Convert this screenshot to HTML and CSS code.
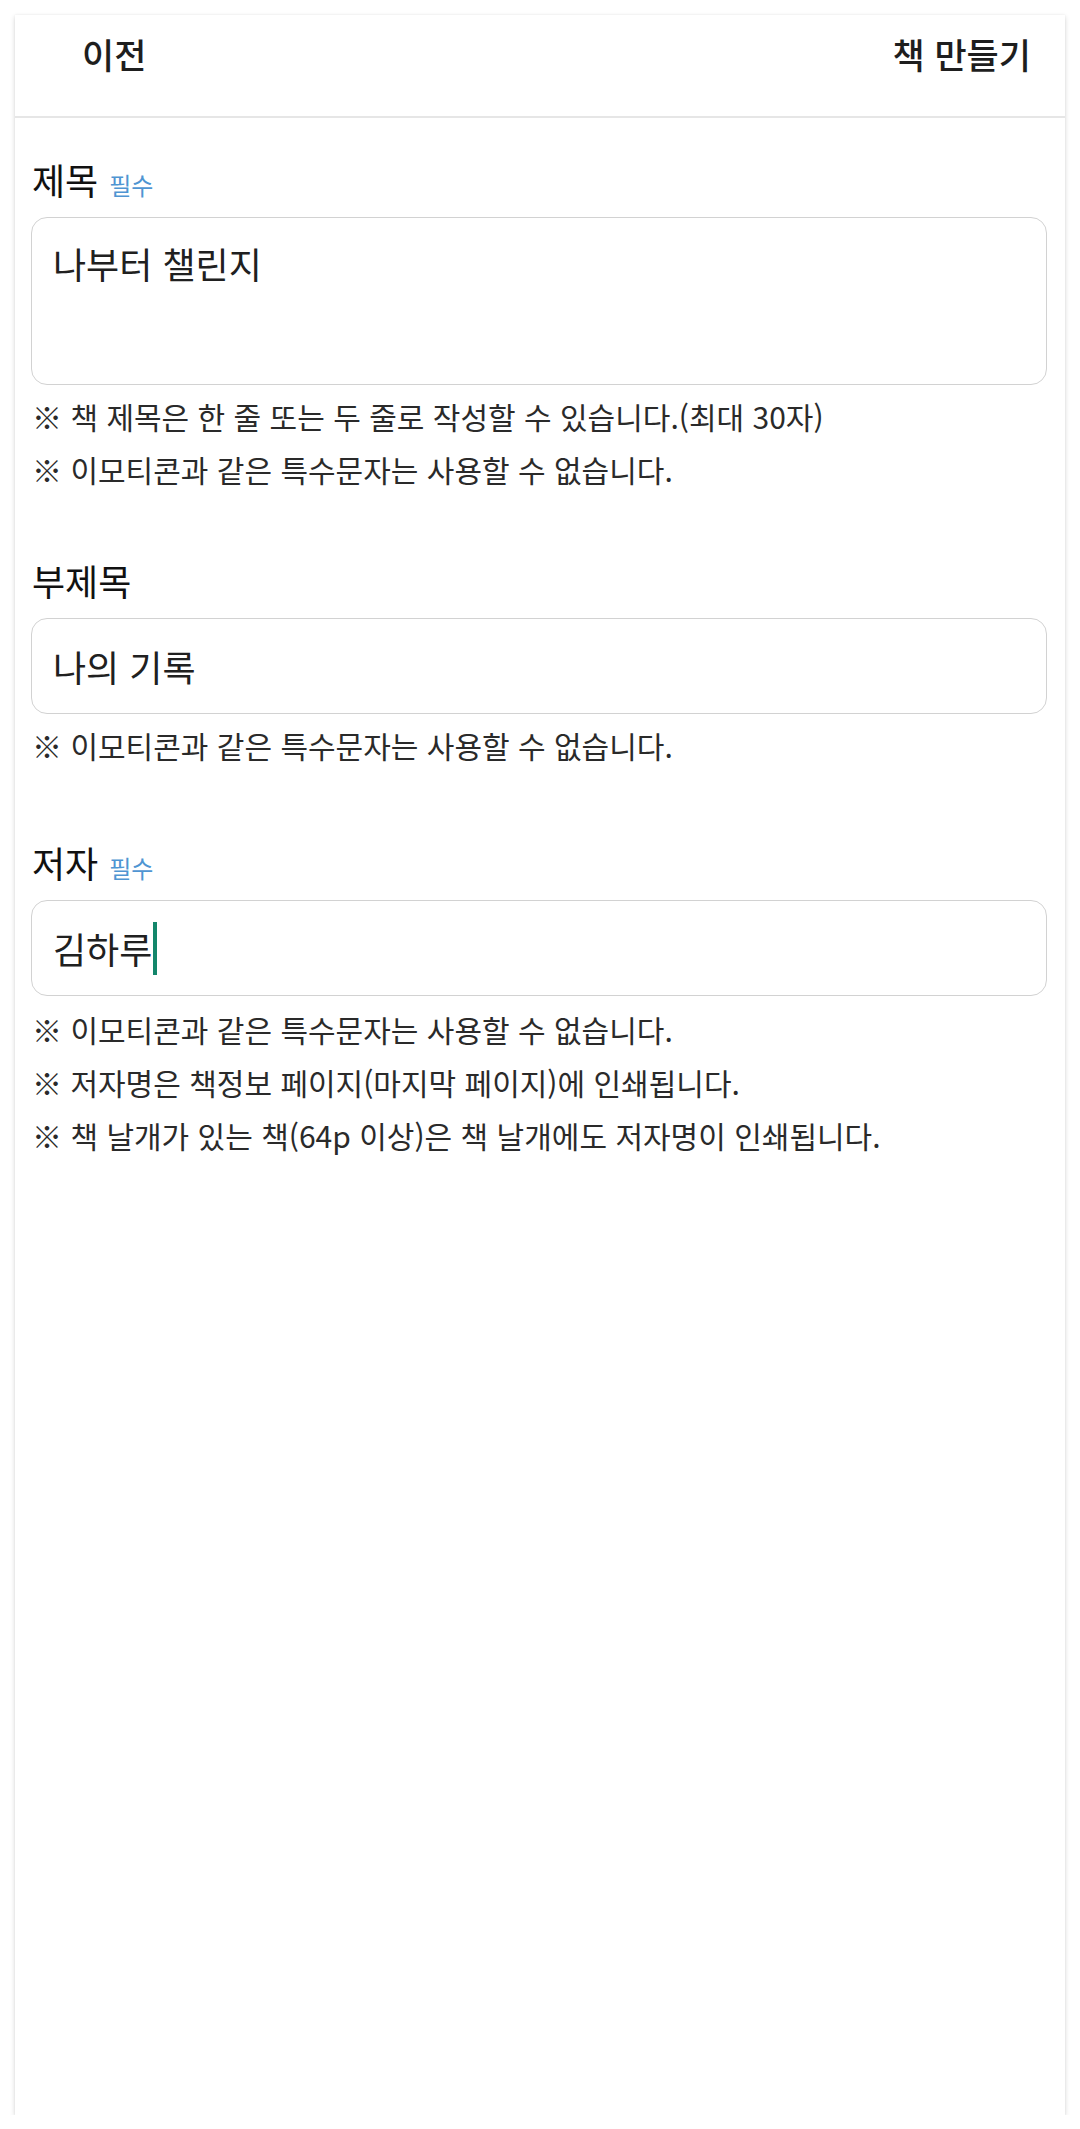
FILE: index.html
```html
<!DOCTYPE html>
<html lang="ko">
<head>
<meta charset="utf-8">
<title>책 만들기</title>
<link rel="stylesheet" href="styles.css">
</head>
<body>
<div class="card">
  <header class="topbar">
    <span class="nav-btn">이전</span>
    <span class="nav-btn nav-right">책 만들기</span>
  </header>
  <main class="form">
    <section class="group">
      <div class="label">제목<span class="req">필수</span></div>
      <div class="field field-area">나부터 챌린지</div>
      <p class="hint">※ 책 제목은 한 줄 또는 두 줄로 작성할 수 있습니다.(최대 30자)</p>
      <p class="hint">※ 이모티콘과 같은 특수문자는 사용할 수 없습니다.</p>
    </section>
    <section class="group">
      <div class="label">부제목</div>
      <div class="field field-line">나의 기록</div>
      <p class="hint">※ 이모티콘과 같은 특수문자는 사용할 수 없습니다.</p>
    </section>
    <section class="group">
      <div class="label">저자<span class="req">필수</span></div>
      <div class="field field-line">김하루<span class="caret"></span></div>
      <p class="hint">※ 이모티콘과 같은 특수문자는 사용할 수 없습니다.</p>
      <p class="hint">※ 저자명은 책정보 페이지(마지막 페이지)에 인쇄됩니다.</p>
      <p class="hint">※ 책 날개가 있는 책(64p 이상)은 책 날개에도 저자명이 인쇄됩니다.</p>
    </section>
  </main>
</div>
</body>
</html>
```

FILE: styles.css
```css
html, body {
  margin: 0;
  padding: 0;
  background: #ffffff;
}

body {
  font-family: "Noto Sans CJK KR", "Noto Sans", sans-serif;
  color: #222222;
}

.card {
  margin: 15px 15px 0 15px;
  width: 1050px;
  height: 2100px;
  background: #ffffff;
  box-shadow: 0 2px 5px rgba(0, 0, 0, 0.16), 0 0 2px rgba(0, 0, 0, 0.06);
  box-sizing: border-box;
}

.topbar {
  height: 103px;
  box-sizing: border-box;
  border-bottom: 2px solid #e6e6e6;
  display: flex;
  justify-content: space-between;
  align-items: flex-start;
  padding: 16px 34px 0 67px;
}

.nav-btn {
  font-size: 35px;
  line-height: 45px;
  font-weight: 500;
  color: #1e1e1e;
}

.form {
  padding: 0 18px 0 16px;
}

.group {
  display: flex;
  flex-direction: column;
}

.group:first-child {
  padding-top: 39px;
}

.group + .group {
  margin-top: 62px;
}

.group:last-child {
  margin-top: 68px;
}

.label {
  font-size: 36px;
  line-height: 44px;
  height: 44px;
  font-weight: 400;
  color: #111111;
  padding-left: 1px;
}

.req {
  font-size: 24px;
  line-height: 1;
  font-weight: 400;
  color: #4f95d2;
  margin-left: 11px;
}

.field {
  margin-top: 16px;
  border: 1.5px solid #d2d2d2;
  border-radius: 16px;
  box-sizing: border-box;
  font-size: 36px;
  line-height: 48px;
  color: #202020;
  padding-left: 21px;
}

.field-area {
  height: 168px;
  padding-top: 21px;
}

.field-line {
  height: 96px;
  display: flex;
  align-items: center;
}

.caret {
  display: inline-block;
  width: 4px;
  height: 53px;
  background: #13866b;
  margin-left: 1px;
}

.hint {
  margin: 0;
  font-size: 30px;
  line-height: 53px;
  color: #2a2a2a;
  padding-left: 1px;
}

.field + .hint {
  margin-top: 5px;
}

.group:last-child .field + .hint {
  margin-top: 7px;
}
```
